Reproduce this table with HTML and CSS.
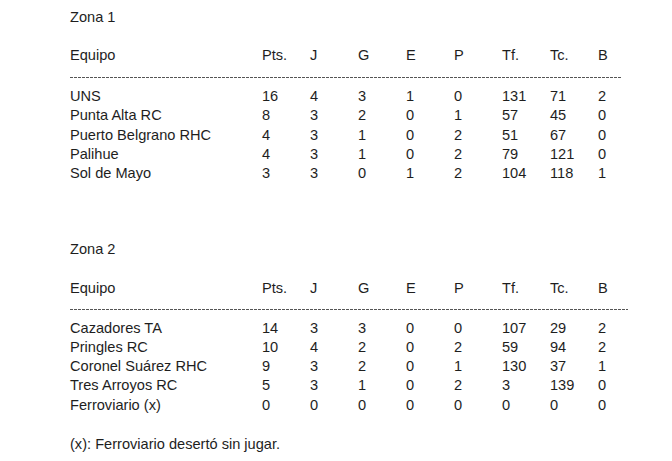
FILE: index.html
```html
<!DOCTYPE html>
<html lang="es">
<head>
<meta charset="utf-8">
<title>Zonas</title>
<link rel="stylesheet" href="styles.css">
</head>
<body>
<div class="page">
  <section class="zone zone-1">
    <h2 class="zone-title">Zona 1</h2>
    <div class="row head"><span>Equipo</span><span>Pts.</span><span>J</span><span>G</span><span>E</span><span>P</span><span>Tf.</span><span>Tc.</span><span>B</span></div>
    <div class="dashes"></div>
    <div class="row"><span>UNS</span><span>16</span><span>4</span><span>3</span><span>1</span><span>0</span><span>131</span><span>71</span><span>2</span></div>
    <div class="row"><span>Punta Alta RC</span><span>8</span><span>3</span><span>2</span><span>0</span><span>1</span><span>57</span><span>45</span><span>0</span></div>
    <div class="row"><span>Puerto Belgrano RHC</span><span>4</span><span>3</span><span>1</span><span>0</span><span>2</span><span>51</span><span>67</span><span>0</span></div>
    <div class="row"><span>Palihue</span><span>4</span><span>3</span><span>1</span><span>0</span><span>2</span><span>79</span><span>121</span><span>0</span></div>
    <div class="row"><span>Sol de Mayo</span><span>3</span><span>3</span><span>0</span><span>1</span><span>2</span><span>104</span><span>118</span><span>1</span></div>
  </section>
  <section class="zone zone-2">
    <h2 class="zone-title">Zona 2</h2>
    <div class="row head"><span>Equipo</span><span>Pts.</span><span>J</span><span>G</span><span>E</span><span>P</span><span>Tf.</span><span>Tc.</span><span>B</span></div>
    <div class="dashes"></div>
    <div class="row"><span>Cazadores TA</span><span>14</span><span>3</span><span>3</span><span>0</span><span>0</span><span>107</span><span>29</span><span>2</span></div>
    <div class="row"><span>Pringles RC</span><span>10</span><span>4</span><span>2</span><span>0</span><span>2</span><span>59</span><span>94</span><span>2</span></div>
    <div class="row"><span>Coronel Suárez RHC</span><span>9</span><span>3</span><span>2</span><span>0</span><span>1</span><span>130</span><span>37</span><span>1</span></div>
    <div class="row"><span>Tres Arroyos RC</span><span>5</span><span>3</span><span>1</span><span>0</span><span>2</span><span>3</span><span>139</span><span>0</span></div>
    <div class="row"><span>Ferroviario (x)</span><span>0</span><span>0</span><span>0</span><span>0</span><span>0</span><span>0</span><span>0</span><span>0</span></div>
  </section>
  <p class="note">(x): Ferroviario desertó sin jugar.</p>
</div>
</body>
</html>
```

FILE: styles.css
```css
html, body {
  margin: 0;
  padding: 0;
  background: #ffffff;
}

body {
  font-family: "Liberation Sans", Arial, sans-serif;
  font-size: 14.6px;
  line-height: 19.2px;
  color: #1e1e1e;
}

.page {
  padding: 8px 0 0 70px;
}

.zone-title {
  margin: 0 0 19px 0;
  font-size: 14.6px;
  font-weight: normal;
  line-height: 19.2px;
}

.zone-2 {
  margin-top: 56.5px;
}

.zone-2 .zone-title {
  margin-bottom: 20.5px;
}

.row {
  display: grid;
  grid-template-columns: 192px repeat(8, 48px);
  white-space: nowrap;
}

.dashes {
  height: 1px;
  margin: 11.3px 0 9.5px 0;
  width: 552px;
  background: repeating-linear-gradient(90deg, #555555 0 3px, transparent 3px 4px);
}

.zone-2 .dashes {
  width: 558px;
  margin-top: 10.5px;
  margin-bottom: 8.7px;
}

.note {
  margin: 20.3px 0 0 0;
}
```
